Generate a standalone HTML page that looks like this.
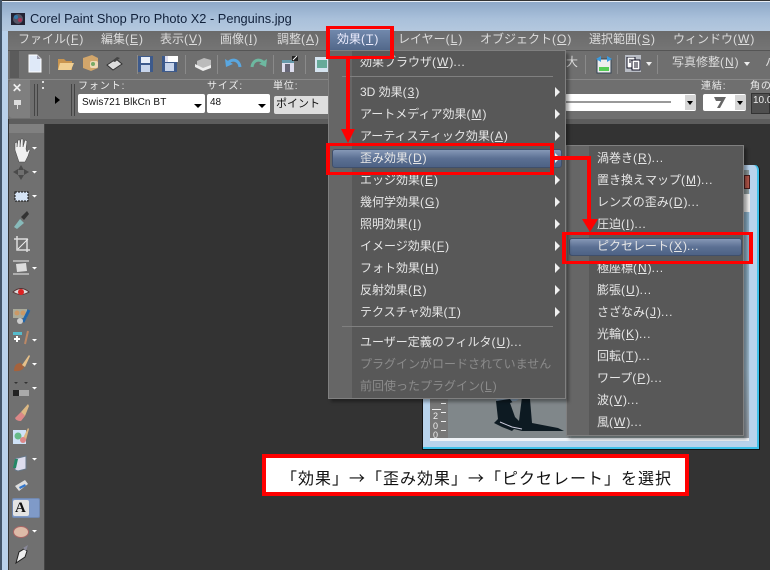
<!DOCTYPE html>
<html lang="ja"><head><meta charset="utf-8"><title>Corel Paint Shop Pro Photo X2</title>
<style>
html,body{margin:0;padding:0;background:#333}
#p{position:relative;width:770px;height:570px;overflow:hidden;background:#333;font:12px/18px "Liberation Sans","Noto Sans CJK JP",sans-serif;color:#e6e6e6}
#p div,#p span.t,#p svg{position:absolute}
.t{position:absolute;white-space:nowrap}
u{margin:0 1px}
b{font-weight:normal;letter-spacing:.7px}
.m{color:#dcdcdc}
.s{font-size:10px;line-height:12px;color:#eee;letter-spacing:.9px}
.ar{width:0;height:0;border-left:5px solid #f0f0f0;border-top:5px solid transparent;border-bottom:5px solid transparent}
.v{width:1px;background:#8a8a8a}
.hl{background:linear-gradient(#8698b6,#5b7093 50%,#4d6285);border:1px solid #3f4f6b;border-radius:3px;box-sizing:border-box}
.red{border:solid #f00;border-width:3px 4px;box-sizing:border-box}
.r{background:#f00}
.d{color:#8b8b8b}
</style></head><body><div id="p">
<!-- title -->
<div style="left:0;top:0;width:770px;height:31px;background:linear-gradient(#8ba6c6,#a9c0da 60%,#b4c8de)"></div>
<div style="left:0;top:0;width:770px;height:1px;background:#333"></div>
<div style="left:0;top:1px;width:770px;height:1px;background:#e8eef5"></div>
<div style="left:0;top:31px;width:8px;height:539px;background:#b9d1ea"></div>
<div style="left:0;top:0;width:2px;height:570px;background:#44566a"></div>
<svg style="left:10px;top:11px" width="16" height="15"><rect x="1" y="2" width="14" height="12" fill="#223"/><circle cx="8" cy="8" r="5" fill="#556"/><circle cx="6" cy="6" r="2" fill="#37a"/><circle cx="10" cy="9" r="2" fill="#a35"/></svg>
<span class="t" style="left:30px;top:10px;font-size:12.8px;color:#10203a">Corel Paint Shop Pro Photo X2 - Penguins.jpg</span>
<!-- menu -->
<div style="left:8px;top:31px;width:762px;height:19px;background:linear-gradient(#6a6a6a,#757575)"></div>
<span class="t m" style="left:18px;top:30px">ファイル(<u>F</u>)</span>
<span class="t m" style="left:101px;top:30px">編集(<u>E</u>)</span>
<span class="t m" style="left:160px;top:30px">表示(<u>V</u>)</span>
<span class="t m" style="left:220px;top:30px">画像(<u>I</u>)</span>
<span class="t m" style="left:277px;top:30px">調整(<u>A</u>)</span>
<div style="left:329px;top:30px;width:62px;height:22px;background:linear-gradient(#7188ac,#4f6587)"></div>
<span class="t" style="left:337px;top:30px;color:#eef">効果(<u>T</u>)</span>
<span class="t m" style="left:398px;top:30px">レイヤー(<u>L</u>)</span>
<span class="t m" style="left:480px;top:30px">オブジェクト(<u>O</u>)</span>
<span class="t m" style="left:589px;top:30px">選択範囲(<u>S</u>)</span>
<span class="t m" style="left:673px;top:30px">ウィンドウ(<u>W</u>)</span>
<!-- toolbar -->
<div style="left:8px;top:50px;width:762px;height:29px;background:#6f6f6f;border-top:1px solid #555;box-sizing:border-box"></div>
<div style="left:10px;top:51px;width:9px;height:27px;background:#5b5b5b"></div>
<div class="v" style="left:49px;top:55px;height:19px"></div><div class="v" style="left:137px;top:55px;height:19px"></div><div class="v" style="left:185px;top:55px;height:19px"></div><div class="v" style="left:217px;top:55px;height:19px"></div><div class="v" style="left:273px;top:55px;height:19px"></div><div class="v" style="left:305px;top:55px;height:19px"></div><div class="v" style="left:585px;top:55px;height:19px"></div><div class="v" style="left:617px;top:55px;height:19px"></div><div class="v" style="left:657px;top:55px;height:19px"></div>
<svg style="left:27px;top:54px" width="16" height="19"><path d="M2 1h8l4 4v13H2z" fill="#dfe9f8" stroke="#fff"/><path d="M10 1l4 4h-4z" fill="#99a"/></svg>
<svg style="left:57px;top:56px" width="18" height="16"><path d="M1 3h6l2 2h6v9H1z" fill="#c9954f"/><path d="M3 7h14l-3 7H1z" fill="#f0cf92"/></svg>
<svg style="left:82px;top:54px" width="17" height="18"><path d="M1 4l9-3 6 3v10l-7 3-8-3z" fill="#d2a66b"/><rect x="8" y="7" width="8" height="7" rx="2" fill="#eed9b5"/><circle cx="11" cy="10" r="2" fill="#7a6"/></svg>
<svg style="left:106px;top:56px" width="17" height="15"><path d="M1 9l9-6 6 5-9 6z" fill="#ddd" stroke="#333"/><path d="M6 5l5-4 3 1-5 4z" fill="#444"/></svg>
<svg style="left:138px;top:56px" width="15" height="16"><rect x="0" y="0" width="15" height="16" fill="#3d5a8c"/><rect x="3" y="1" width="9" height="6" fill="#e8eef8"/><rect x="3" y="9" width="9" height="7" fill="#c7d4ea"/></svg>
<svg style="left:162px;top:55px" width="16" height="17"><rect x="0" y="1" width="15" height="16" fill="#3d5a8c"/><rect x="3" y="8" width="9" height="8" fill="#c7d4ea"/><rect x="6" y="1" width="10" height="6" fill="#fff"/><rect x="3" y="1" width="3" height="6" fill="#dde"/></svg>
<svg style="left:194px;top:57px" width="18" height="14"><path d="M3 4l7-3 7 2v6l-7 3-7-3z" fill="#bbb"/><path d="M1 7l8 4 8-3v3l-8 3-8-4z" fill="#eee"/></svg>
<svg style="left:225px;top:58px" width="17" height="13"><path d="M2 6c4-6 12-5 13 3" fill="none" stroke="#5aa7e0" stroke-width="3"/><path d="M0 1l1 8 7-3z" fill="#5aa7e0"/></svg>
<svg style="left:250px;top:58px" width="17" height="13"><path d="M15 6C11 0 3 1 2 9" fill="none" stroke="#6db8a0" stroke-width="3"/><path d="M17 1l-1 8-7-3z" fill="#6db8a0"/></svg>
<svg style="left:281px;top:55px" width="18" height="18"><rect x="1" y="5" width="12" height="12" fill="#dde"/><rect x="1" y="5" width="12" height="3" fill="#69a"/><rect x="4" y="9" width="5" height="8" fill="#667"/><path d="M11 1h6v5h-6z" fill="#222"/><path d="M12 5l4-4" stroke="#fff"/></svg>
<svg style="left:314px;top:56px" width="14" height="17"><rect x="1" y="1" width="13" height="15" fill="#d5e4f0"/><rect x="3" y="4" width="10" height="8" fill="#6a9"/></svg>
<span class="t m" style="left:566px;top:53px">大</span>
<svg style="left:595px;top:56px" width="18" height="18"><rect x="2" y="3" width="14" height="14" fill="#eee" stroke="#345"/><rect x="4" y="11" width="10" height="4" fill="#5c5"/><path d="M1 3l5-3v6zM17 3l-5-3v6z" fill="#3a9be0"/></svg>
<div style="left:625px;top:55px;width:16px;height:17px;background:#b8bcc4"></div>
<svg style="left:626px;top:57px" width="15" height="14"><rect x="1" y="0" width="8" height="11" fill="#fff" stroke="#112"/><rect x="6" y="3" width="8" height="10" fill="#fff" stroke="#112"/><path d="M8 6h4M8 8h4M8 10h4M3 3h3M3 5h2" stroke="#112"/></svg>
<div style="left:646px;top:62px;border-left:3.5px solid transparent;border-right:3.5px solid transparent;border-top:4px solid #eee"></div>
<span class="t m" style="left:672px;top:53px">写真修整(<u>N</u>)</span>
<div style="left:744px;top:62px;border-left:3.5px solid transparent;border-right:3.5px solid transparent;border-top:4px solid #eee"></div>
<span class="t m" style="left:765px;top:53px">ハ</span>
<!-- options bar -->
<div style="left:8px;top:79px;width:762px;height:40px;background:#6f6f6f;border-top:1px solid #888;box-sizing:border-box"></div>
<div style="left:9px;top:80px;width:21px;height:38px;background:#7f7f7f;border-radius:3px 0 0 3px"></div>
<span class="t" style="left:12px;top:79px;font-size:12px;font-weight:bold;color:#eee">✕</span>
<div style="left:14px;top:100px;width:7px;height:5px;background:#ddd"></div><div style="left:17px;top:105px;width:1px;height:4px;background:#ddd"></div>
<div style="left:34px;top:84px;width:1px;height:32px;background:#444"></div><div style="left:37px;top:84px;width:1px;height:32px;background:#444"></div>
<div style="left:42px;top:81px;width:2px;height:8px;border-top:2px dotted #ddd;border-bottom:2px dotted #ddd;box-sizing:border-box"></div>
<div style="left:71px;top:84px;width:1px;height:32px;background:#444"></div><div style="left:74px;top:84px;width:1px;height:32px;background:#444"></div>
<div style="left:55px;top:96px;border-left:5px solid #000;border-top:4px solid transparent;border-bottom:4px solid transparent"></div>
<span class="t s" style="left:78px;top:81px">フォント:</span>
<span class="t s" style="left:207px;top:81px">サイズ:</span>
<span class="t s" style="left:273px;top:81px">単位:</span>
<span class="t s" style="left:701px;top:81px">連結:</span>
<span class="t s" style="left:750px;top:81px">角の</span>
<div style="left:78px;top:94px;width:127px;height:19px;background:#fff;border-radius:2px"></div>
<span class="t" style="left:82px;top:96px;font-size:10px;line-height:13px;color:#111;letter-spacing:.1px">Swis721 BlkCn BT</span>
<div style="left:194px;top:104px;border-left:4px solid transparent;border-right:4px solid transparent;border-top:4px solid #000"></div>
<div style="left:207px;top:94px;width:63px;height:19px;background:#fff;border-radius:2px"></div>
<span class="t" style="left:210px;top:96px;font-size:10px;line-height:13px;color:#111">48</span>
<div style="left:258px;top:104px;border-left:4px solid transparent;border-right:4px solid transparent;border-top:4px solid #000"></div>
<div style="left:274px;top:96px;width:56px;height:18px;background:#dedede;border-radius:2px"></div>
<span class="t" style="left:276px;top:97px;font-size:11px;line-height:15px;color:#111">ポイント</span>
<div style="left:565px;top:94px;width:131px;height:17px;background:#fff;border-radius:2px"></div>
<div style="left:565px;top:101px;width:106px;height:2px;background:#999"></div>
<div style="left:685px;top:95px;width:11px;height:15px;background:#d5d5d5"></div>
<div style="left:687px;top:101px;border-left:3.5px solid transparent;border-right:3.5px solid transparent;border-top:4px solid #000"></div>
<div style="left:703px;top:94px;width:43px;height:17px;background:#fff;border-radius:2px"></div>
<svg style="left:711px;top:95px" width="20" height="15"><path d="M3 2h12l-6 11H6l4-7H5z" fill="#666"/></svg>
<div style="left:735px;top:95px;width:11px;height:15px;background:#d5d5d5"></div>
<div style="left:737px;top:101px;border-left:3.5px solid transparent;border-right:3.5px solid transparent;border-top:4px solid #000"></div>
<div style="left:751px;top:93px;width:19px;height:21px;background:#4f4f4f;border:1px solid #333;box-sizing:border-box"></div>
<span class="t" style="left:753px;top:92px;font-size:10px;color:#eee">10.0</span>
<div style="left:9px;top:119px;width:761px;height:5px;background:#5d5d5d"></div>
<!-- toolbox -->
<div style="left:9px;top:124px;width:35px;height:446px;background:#707070"></div>
<div style="left:9px;top:124px;width:35px;height:9px;background:#808080"></div>
<div style="left:44px;top:124px;width:1px;height:446px;background:#444"></div>
<svg style="left:0;top:0;width:60px;height:570px" viewBox="0 0 60 570">
<path d="M15 150v-7l2-1v5l1-7 2 0v7l1-8 2 0 0 8 2-7 2 1-1 8 1 3 2-3 1 1-2 6-3 6h-6z" fill="#f1f1f1" stroke="#444" stroke-width=".5"/>
<path d="M21 165l3 5h-6zM21 180l3-5h-6zM13 172l5-3v6zM29 172l-5-3v6z" fill="#4a4a4a"/>
<rect x="15" y="192" width="13" height="9" fill="#d6e4f5" stroke="#111" stroke-dasharray="2 1"/>
<path d="M14 227l6-8 4 4-7 6z" fill="#8bb" /><path d="M21 217l6-6 2 3-5 6z" fill="#333"/>
<path d="M17 236v14h13M14 239h13v13" fill="none" stroke="#ddd" stroke-width="1.500"/><path d="M18 249l10-10" stroke="#eee"/>
<path d="M13 261h16M13 274h16" stroke="#eee"/><path d="M16 264l10-1 1 8-10 1z" fill="#ddd"/>
<path d="M13 292q8-7 16 0q-8 5-16 0z" fill="#ddd" stroke="#533"/><circle cx="21" cy="292" r="3" fill="#d22"/>
<rect x="13" y="309" width="14" height="9" fill="#aa9"/><circle cx="17" cy="313" r="2.5" fill="#c96"/><circle cx="23" cy="313" r="2.5" fill="#c96"/><path d="M23 322l6-12" stroke="#26a" stroke-width="3"/><circle cx="20" cy="321" r="3" fill="#ccc"/>
<rect x="13" y="332" width="9" height="3" fill="#5bc"/><path d="M17 336v6m-3-3h6" stroke="#fff" stroke-width="2"/><path d="M25 344l3-13" stroke="#b86" stroke-width="2"/>
<path d="M14 371q0-8 7-8l3 4q-2 5-10 4z" fill="#a5623c"/><path d="M22 365l7-10 1 1-5 11z" fill="#e6c089"/>
<path d="M14 382h4l-2 2zM24 382h4l-2 2z" fill="#333"/><rect x="13" y="390" width="16" height="6" fill="#aaa"/><rect x="13" y="390" width="6" height="6" fill="#222"/>
<path d="M15 418l6-6 4 4-4 5q-5 0-6-3z" fill="#d88"/><path d="M21 412l7-8 1 2-4 10z" fill="#dcb883"/>
<rect x="13" y="430" width="13" height="14" fill="#cfe2f7"/><circle cx="18" cy="436" r="3.5" fill="#6b8"/><path d="M23 438l5-10 1 1-3 11z" fill="#dcb883"/><circle cx="23" cy="440" r="3" fill="#d88"/>
<path d="M15 470v-10q0-2 3-2l8-2v13l-8 2z" fill="#dde" stroke="#678"/><path d="M13 468l2-9 3 0-2 9z" fill="#286"/>
<path d="M15 486l10-6 3 4-9 7z" fill="#ddd"/><path d="M19 487l6-3 1 2-6 3z" fill="#37c"/>
<ellipse cx="21" cy="532" rx="7.500" ry="5.500" fill="#ddbba8" stroke="#a66"/>
<path d="M16 563l3-11 5-3 3 2-2 6z" fill="#eee" stroke="#222"/><path d="M23 548l5-3-2 6z" fill="#889"/>
<path d="M32 147h5l-2.500 2.500zM32 171h5l-2.500 2.500zM32 195h5l-2.500 2.500zM32 267h5l-2.500 2.500zM32 339h5l-2.500 2.500zM32 363h5l-2.500 2.500zM32 387h5l-2.500 2.500zM32 458h5l-2.500 2.500zM32 530h5l-2.500 2.500z" fill="#fff"/>
</svg>
<div style="left:12px;top:498px;width:28px;height:20px;background:#7f9ac8;border:1px solid #7088b0;border-radius:2px;box-sizing:border-box"></div>
<div style="left:13px;top:500px;width:16px;height:16px;background:#e4e4e4;border-radius:2px"></div>
<span class="t" style="left:15px;top:499px;font:bold 15px/18px 'Liberation Serif',serif;color:#111">A</span>
<!-- image window -->
<div style="left:422px;top:165px;width:338px;height:285px;background:#b8d3ec;border:1px solid #111;border-top:0;box-sizing:border-box;border-radius:0 5px 0 0;box-shadow:inset -2px 0 #3fc0e8,inset 0 -2px #3fc0e8"></div>
<div style="left:430px;top:170px;width:319px;height:271px;background:#eef2f6"></div>
<div style="left:430px;top:170px;width:319px;height:268px;background:#8d9a9c"></div>
<div style="left:744px;top:175px;width:6px;height:14px;background:#b5574b;border:1px solid #4a2020;box-sizing:border-box"></div>
<div style="left:744px;top:194px;width:6px;height:18px;background:#eee"></div>
<div style="left:744px;top:212px;width:5px;height:226px;background:linear-gradient(#8bb0c8,#9db9cc 70%,#99a0a8)"></div>
<div style="left:430px;top:395px;width:18px;height:43px;background:#777"></div>
<span class="t" style="left:433px;top:411px;font-size:9px;line-height:10px;color:#eee">2</span>
<span class="t" style="left:433px;top:421px;font-size:9px;line-height:10px;color:#eee">0</span>
<span class="t" style="left:433px;top:431px;font-size:9px;line-height:8px;color:#eee">0</span>
<div style="left:441px;top:403px;width:5px;height:1px;background:#eee"></div><div style="left:441px;top:412px;width:5px;height:1px;background:#eee"></div><div style="left:441px;top:421px;width:5px;height:1px;background:#eee"></div><div style="left:441px;top:430px;width:5px;height:1px;background:#eee"></div>
<div style="left:432px;top:409px;width:9px;height:1px;background:#eee"></div>
<div style="left:448px;top:395px;width:122px;height:43px;background:#80878a"></div>
<svg style="left:490px;top:395px" width="80" height="40"><path d="M4 0h36l-8 6-10 0-8 6-6-4z" fill="#7f95ab"/><path d="M6 6l14-2 6 8 4-8 10 0 2 24 26 5 6 3H32l-8-2-2 2-10-4-8-4 4-4z" fill="#0d1a22"/><path d="M20 8l5 14 4 4 3-24-6 4z" fill="#80878a"/><path d="M10 27l12 5 10 2" stroke="#ccd" fill="none"/></svg>
<!-- submenu -->
<div style="left:566px;top:145px;width:178px;height:291px;background:#585858;border:1px solid #808080;box-sizing:border-box;box-shadow:3px 3px 3px rgba(0,0,0,.35)"></div>
<div style="left:567px;top:146px;width:22px;height:289px;background:#666"></div>
<div class="hl" style="left:569px;top:238px;width:173px;height:18px"></div>
<span class="t" style="left:597px;top:149px">渦巻き(<u>R</u>)<b>...</b></span>
<span class="t" style="left:597px;top:171px">置き換えマップ(<u>M</u>)<b>...</b></span>
<span class="t" style="left:597px;top:193px">レンズの歪み(<u>D</u>)<b>...</b></span>
<span class="t" style="left:597px;top:215px">圧迫(<u>I</u>)<b>...</b></span>
<span class="t" style="left:597px;top:237px">ピクセレート(<u>X</u>)<b>...</b></span>
<span class="t" style="left:597px;top:259px">極座標(<u>N</u>)<b>...</b></span>
<span class="t" style="left:597px;top:281px">膨張(<u>U</u>)<b>...</b></span>
<span class="t" style="left:597px;top:303px">さざなみ(<u>J</u>)<b>...</b></span>
<span class="t" style="left:597px;top:325px">光輪(<u>K</u>)<b>...</b></span>
<span class="t" style="left:597px;top:347px">回転(<u>T</u>)<b>...</b></span>
<span class="t" style="left:597px;top:369px">ワープ(<u>P</u>)<b>...</b></span>
<span class="t" style="left:597px;top:391px">波(<u>V</u>)<b>...</b></span>
<span class="t" style="left:597px;top:413px">風(<u>W</u>)<b>...</b></span>
<!-- main menu -->
<div style="left:328px;top:50px;width:238px;height:349px;background:#585858;border:1px solid #808080;box-sizing:border-box;box-shadow:3px 3px 3px rgba(0,0,0,.35)"></div>
<div style="left:329px;top:51px;width:23px;height:347px;background:#666"></div>
<div style="left:342px;top:76px;width:211px;height:1px;background:#808080"></div>
<div style="left:342px;top:326px;width:211px;height:1px;background:#808080"></div>
<div class="hl" style="left:332px;top:149px;width:230px;height:19px"></div>
<span class="t" style="left:360px;top:53px">効果ブラウザ(<u>W</u>)<b>...</b></span>
<span class="t" style="left:360px;top:83px">3D 効果(<u>3</u>)</span>
<span class="t" style="left:360px;top:105px">アートメディア効果(<u>M</u>)</span>
<span class="t" style="left:360px;top:127px">アーティスティック効果(<u>A</u>)</span>
<span class="t" style="left:360px;top:149px">歪み効果(<u>D</u>)</span>
<span class="t" style="left:360px;top:171px">エッジ効果(<u>E</u>)</span>
<span class="t" style="left:360px;top:193px">幾何学効果(<u>G</u>)</span>
<span class="t" style="left:360px;top:215px">照明効果(<u>I</u>)</span>
<span class="t" style="left:360px;top:237px">イメージ効果(<u>F</u>)</span>
<span class="t" style="left:360px;top:259px">フォト効果(<u>H</u>)</span>
<span class="t" style="left:360px;top:281px">反射効果(<u>R</u>)</span>
<span class="t" style="left:360px;top:303px">テクスチャ効果(<u>T</u>)</span>
<span class="t" style="left:360px;top:333px">ユーザー定義のフィルタ(<u>U</u>)<b>...</b></span>
<span class="t d" style="left:360px;top:355px">プラグインがロードされていません</span>
<span class="t d" style="left:360px;top:377px">前回使ったプラグイン(<u>L</u>)</span>
<div class="ar" style="left:555px;top:87px"></div><div class="ar" style="left:555px;top:109px"></div><div class="ar" style="left:555px;top:131px"></div><div class="ar" style="left:555px;top:153px"></div><div class="ar" style="left:555px;top:175px"></div><div class="ar" style="left:555px;top:197px"></div><div class="ar" style="left:555px;top:219px"></div><div class="ar" style="left:555px;top:241px"></div><div class="ar" style="left:555px;top:263px"></div><div class="ar" style="left:555px;top:285px"></div><div class="ar" style="left:555px;top:307px"></div>
<!-- annotations -->
<div class="red" style="left:326px;top:26px;width:68px;height:33px"></div>
<div class="r" style="left:346px;top:59px;width:4px;height:71px"></div>
<div style="left:341px;top:129px;border-left:7px solid transparent;border-right:7px solid transparent;border-top:14px solid #f00"></div>
<div class="red" style="left:326px;top:143px;width:228px;height:32px"></div>
<div class="r" style="left:554px;top:156px;width:37px;height:4px"></div>
<div class="r" style="left:587px;top:156px;width:4px;height:64px"></div>
<div style="left:582px;top:219px;border-left:8px solid transparent;border-right:8px solid transparent;border-top:13px solid #f00"></div>
<div class="red" style="left:562px;top:232px;width:191px;height:32px"></div>
<div style="left:262px;top:454px;width:427px;height:42px;background:#fff;border:4px solid #f00;box-sizing:border-box"></div>
<span class="t" style="left:281px;top:467px;font-family:'Noto Sans CJK JP',sans-serif;font-size:16px;line-height:20px;color:#111;letter-spacing:1px">「効果」→「歪み効果」→「ピクセレート」を選択</span>
</div></body></html>
